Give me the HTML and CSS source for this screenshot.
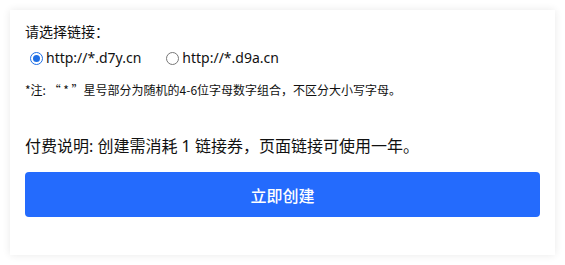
FILE: index.html
```html
<!DOCTYPE html>
<html lang="zh">
<head>
<meta charset="utf-8">
<link rel="stylesheet" href="styles.css">
</head>
<body>
<div class="card">
  <div class="label">请选择链接：</div>
  <div class="radios">
    <label class="opt"><span class="radio checked"></span><span>http://*.d7y.cn</span></label>
    <label class="opt"><span class="radio"></span><span>http://*.d9a.cn</span></label>
  </div>
  <div class="note">*注: “ * ”星号部分为随机的4-6位字母数字组合，不区分大小写字母。</div>
  <div class="pay">付费说明: 创建需消耗 1 链接券，页面链接可使用一年。</div>
  <button class="btn">立即创建</button>
</div>
</body>
</html>
```
FILE: styles.css
```css
html, body { margin: 0; padding: 0; background: #fff; }
body {
  font-family: "Noto Sans", "Noto Sans CJK SC", sans-serif;
  color: #111;
  padding: 10px;
}
.card {
  width: 545px;
  height: 245px;
  box-sizing: border-box;
  background: #fff;
  box-shadow: 0 0 8px rgba(0,0,0,0.09);
  padding: 12px 15px 0 15px;
  display: flex;
  flex-direction: column;
}
.label { font-size: 14px; line-height: 20px; }
.radios {
  display: flex;
  gap: 25px;
  margin-top: 6px;
  padding-left: 5px;
  font-size: 14px;
  line-height: 20px;
}
.opt { display: flex; align-items: center; gap: 3px; }
.radio {
  width: 11px; height: 11px;
  border: 1px solid #777;
  border-radius: 50%;
  box-sizing: content-box;
  display: inline-block;
  position: relative;
  background: #fff;
}
.radio.checked { border-color: #1f6fe5; }
.radio.checked::after {
  content: "";
  position: absolute;
  left: 2px; top: 2px;
  width: 7px; height: 7px;
  border-radius: 50%;
  background: #1f6fe5;
}
.note {
  font-family: "Noto Sans CJK SC", sans-serif;
  font-size: 12px;
  line-height: 16px;
  margin-top: 14px;
}
.pay { font-size: 16px; line-height: 22px; margin-top: 37px; }
.btn {
  margin-top: 15px;
  height: 45px;
  width: 515px;
  border: none;
  border-radius: 4px;
  background: #246bfd;
  color: #fff;
  font-family: inherit;
  font-size: 16px;
  font-weight: 500;
}
```
